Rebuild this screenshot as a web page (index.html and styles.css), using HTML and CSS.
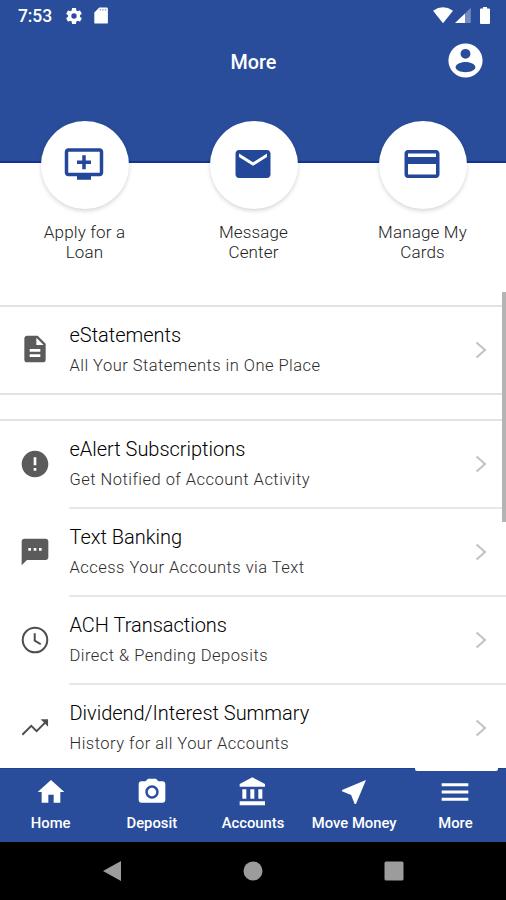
FILE: index.html
```html
<!DOCTYPE html>
<html lang="en">
<head>
    <meta charset="UTF-8">
    <meta name="viewport" content="width=device-width, initial-scale=1.0">
    <title>More</title>
    <link rel="stylesheet" href="styles.css">
</head>
<body>

<div class="phone">
    <header class="header">
        <div class="status-bar">
            <span class="time">7:53</span>
            <svg class="gear" viewBox="0 0 24 24"><path fill-rule="evenodd" d="M19.14 12.94c.04-.3.06-.61.06-.94 0-.32-.02-.64-.07-.94l2.03-1.58c.18-.14.23-.41.12-.61l-1.92-3.32c-.12-.22-.37-.29-.59-.22l-2.39.96c-.5-.38-1.03-.7-1.62-.94l-.36-2.54c-.04-.24-.24-.41-.48-.41h-3.84c-.24 0-.43.17-.47.41l-.36 2.54c-.59.24-1.13.57-1.62.94l-2.39-.96c-.22-.08-.47 0-.59.22L2.74 8.87c-.12.21-.08.47.12.61l2.03 1.58c-.05.3-.09.63-.09.94s.02.64.07.94l-2.03 1.58c-.18.14-.23.41-.12.61l1.92 3.32c.12.22.37.29.59.22l2.39-.96c.5.38 1.03.7 1.62.94l.36 2.54c.05.24.24.41.48.41h3.84c.24 0 .44-.17.47-.41l.36-2.54c.59-.24 1.13-.56 1.62-.94l2.39.96c.22.08.47 0 .59-.22l1.92-3.32c.12-.22.07-.47-.12-.61l-2.01-1.58zM12 15.2a3.2 3.2 0 1 1 0-6.4 3.2 3.2 0 0 1 0 6.4z"/></svg>
            <svg class="sdcard" viewBox="0 0 14 17"><path d="M5.3 .5H12.6Q13.9 .5 13.9 1.8V15.4Q13.9 16.6 12.6 16.6H1.5Q.3 16.6 .3 15.4V5.6z"/><path class="slots" d="M5.6 2h1.4v1.6H5.6zM8.2 2h1.4v1.6H8.2zM10.8 2h1.4v1.6h-1.4z"/></svg>
            <div class="signals">
                <svg class="wifi" viewBox="0 0 20 17"><path d="M0 3.7Q10-3 20 3.7L10 16.2z"/></svg>
                <svg class="cell" viewBox="0 0 16 17"><path opacity=".35" d="M10 6.6 15.8 .8V16H10z"/><path d="M0 16 10 6.6V16z"/></svg>
                <svg class="battery" viewBox="0 0 10 17"><path d="M3 0H7V1.6H9Q10 1.6 10 2.6V16Q10 17 9 17H1Q0 17 0 16V2.6Q0 1.6 1 1.6H3z"/></svg>
            </div>
        </div>
        <div class="title-bar">
            <h1>More</h1>
            <svg class="account" viewBox="0 0 24 24"><path fill-rule="evenodd" d="M12 2a10 10 0 1 0 0 20 10 10 0 0 0 0-20zm0 3.2a2.9 2.9 0 1 1 0 5.8 2.9 2.9 0 0 1 0-5.8zm0 7.7c3 0 5.8 1.4 5.8 3.1S15 18.9 12 18.9 6.2 17.7 6.2 16s2.8-3.1 5.8-3.1z"/></svg>
        </div>
    </header>

    <div class="shortcuts">
        <div class="shortcut">
            <div class="circle"><svg viewBox="0 0 24 24"><path d="M21 3H3c-1.11 0-2 .89-2 2v12c0 1.1.89 2 2 2h5v2h8v-2h5c1.1 0 1.99-.9 1.99-2L23 5c0-1.11-.9-2-2-2zm0 14H3V5h18v12zm-5-7v2h-3v3h-2v-3H8v-2h3V7h2v3h3z"/></svg></div>
            <p>Apply for a<br>Loan</p>
        </div>
        <div class="shortcut">
            <div class="circle"><svg viewBox="0 0 24 24"><path d="M20 4H4c-1.1 0-1.99.9-1.99 2L2 18c0 1.1.9 2 2 2h16c1.1 0 2-.9 2-2V6c0-1.1-.9-2-2-2zm0 4l-8 5-8-5V6l8 5 8-5v2z"/></svg></div>
            <p>Message<br>Center</p>
        </div>
        <div class="shortcut">
            <div class="circle"><svg viewBox="0 0 24 24"><path d="M20 4H4c-1.11 0-1.99.89-1.99 2L2 18c0 1.11.89 2 2 2h16c1.11 0 2-.89 2-2V6c0-1.11-.89-2-2-2zm0 14H4v-6h16v6zm0-10H4V6h16v2z"/></svg></div>
            <p>Manage My<br>Cards</p>
        </div>
    </div>

    <main class="lists">
        <div class="list single">
            <div class="row">
                <svg class="icon" viewBox="0 0 24 24"><path d="M14 2H6c-1.1 0-1.99.9-1.99 2L4 20c0 1.1.89 2 1.99 2H18c1.1 0 2-.9 2-2V8l-6-6zm2 16H8v-2h8v2zm0-4H8v-2h8v2zm-3-5V3.5L18.5 9H13z"/></svg>
                <div class="info"><div><h2>eStatements</h2><p>All Your Statements in One Place</p></div><svg class="chevron" viewBox="0 0 12 18"><path d="M1.5 1.5 10 9 1.5 16.5"/></svg></div>
            </div>
        </div>
        <div class="list">
            <div class="row">
                <svg class="icon" viewBox="0 0 24 24"><path d="M12 2C6.48 2 2 6.48 2 12s4.48 10 10 10 10-4.48 10-10S17.52 2 12 2zm1 15h-2v-2h2v2zm0-4h-2V7h2v6z"/></svg>
                <div class="info"><div><h2>eAlert Subscriptions</h2><p>Get Notified of Account Activity</p></div><svg class="chevron" viewBox="0 0 12 18"><path d="M1.5 1.5 10 9 1.5 16.5"/></svg></div>
            </div>
            <div class="row">
                <svg class="icon" viewBox="0 0 24 24"><path d="M20 2H4c-1.1 0-2 .9-2 2v18l4-4h14c1.1 0 2-.9 2-2V4c0-1.1-.9-2-2-2zM9 11H7V9h2v2zm4 0h-2V9h2v2zm4 0h-2V9h2v2z"/></svg>
                <div class="info"><div><h2>Text Banking</h2><p>Access Your Accounts via Text</p></div><svg class="chevron" viewBox="0 0 12 18"><path d="M1.5 1.5 10 9 1.5 16.5"/></svg></div>
            </div>
            <div class="row">
                <svg class="icon line" viewBox="0 0 24 24"><circle cx="12" cy="12" r="9.2"/><path d="M11.8 7V12.5L16.3 15.2"/></svg>
                <div class="info"><div><h2>ACH Transactions</h2><p>Direct &amp; Pending Deposits</p></div><svg class="chevron" viewBox="0 0 12 18"><path d="M1.5 1.5 10 9 1.5 16.5"/></svg></div>
            </div>
            <div class="row">
                <svg class="icon line" viewBox="0 0 24 24"><path d="M2.5 17 9.2 10.4 13.2 14.4 20.5 7"/><path class="tip" d="M16.3 5.5H21.8V11z"/></svg>
                <div class="info"><div><h2>Dividend/Interest Summary</h2><p>History for all Your Accounts</p></div><svg class="chevron" viewBox="0 0 12 18"><path d="M1.5 1.5 10 9 1.5 16.5"/></svg></div>
            </div>
        </div>
    </main>

    <nav class="tabs">
        <div class="tab"><svg viewBox="0 0 24 24"><path d="M10 20v-6h4v6h5v-8h3L12 3 2 12h3v8z"/></svg><span>Home</span></div>
        <div class="tab"><svg viewBox="0 0 24 24"><circle cx="12" cy="12" r="3.2"/><path d="M9 2L7.17 4H4c-1.1 0-2 .9-2 2v12c0 1.1.9 2 2 2h16c1.1 0 2-.9 2-2V6c0-1.1-.9-2-2-2h-3.17L15 2H9zm3 15c-2.76 0-5-2.24-5-5s2.24-5 5-5 5 2.24 5 5-2.24 5-5 5z"/></svg><span>Deposit</span></div>
        <div class="tab"><svg viewBox="0 0 24 24"><path d="M4 10v7h3v-7H4zm6 0v7h3v-7h-3zM2 22h19v-3H2v3zm14-12v7h3v-7h-3zm-4.5-9L2 6v2h19V6l-9.5-5z"/></svg><span>Accounts</span></div>
        <div class="tab"><svg viewBox="0 0 24 24"><path d="M21 3L3 10.53v.98l6.84 2.65L12.48 21h.98L21 3z"/></svg><span>Move Money</span></div>
        <div class="tab active"><svg viewBox="0 0 24 24"><path d="M2 5.4h20v2.2H2zM2 10.9h20v2.2H2zM2 16.4h20v2.2H2z"/></svg><span>More</span></div>
    </nav>

    <footer class="system-nav">
        <svg viewBox="0 0 20 20"><path d="M19 0V20L1 10z"/></svg>
        <svg viewBox="0 0 20 20"><circle cx="10" cy="10" r="9.5"/></svg>
        <svg viewBox="0 0 20 20"><rect x=".5" y=".5" width="19" height="19" rx="1.5"/></svg>
    </footer>

    <div class="scrollbar"></div>
</div>

</body>
</html>
```
FILE: styles.css
```css
* { box-sizing: border-box; }
body { font-family: Roboto, sans-serif; margin: 0; background: #fff; }
h1, h2, p { margin: 0; font-weight: 400; }
svg { display: block; flex: none; }

.phone { position: relative; display: flex; flex-direction: column; width: 506px; height: 900px; overflow: hidden; }

.header { flex: none; height: 163px; background: #294d9b; color: #fff; fill: #fff; border-bottom: 2px solid #14348f; }
.status-bar { display: flex; align-items: center; height: 31px; padding: 0 16px 0 18px; }
.time { width: 46px; font-size: 17.5px; font-weight: 500; letter-spacing: -0.1px; }
.gear { width: 20px; height: 20px; }
.sdcard { width: 14px; height: 17px; margin-left: 10px; }
.sdcard .slots { fill: #8fa3cd; }
.signals { display: flex; align-items: center; margin-left: auto; }
.wifi { width: 20px; height: 17px; }
.cell { width: 16px; height: 17px; margin-left: 2px; }
.battery { width: 10px; height: 17px; margin-left: 9px; }
.title-bar { display: grid; grid-template-columns: 1fr auto 1fr; align-items: center; height: 60px; padding: 0 20px; }
.title-bar h1 { grid-column: 2; padding: 2px 0 0 1px; font-size: 19.8px; font-weight: 500; }
.account { width: 41px; height: 41px; margin-bottom: 1px; justify-self: end; }

.shortcuts { flex: none; display: flex; width: 507px; height: 142px; margin-top: -42px; }
.shortcut { flex: 1; text-align: center; }
.shortcut p { font-size: 17px; font-weight: 300; line-height: 20px; letter-spacing: 0.15px; color: #222; }
.circle { display: flex; align-items: center; justify-content: center; width: 88px; height: 88px; margin: 0 auto 13px; padding: 0 1px 2px 0; border-radius: 50%; background: #fff; box-shadow: 0 2px 4px rgba(0, 0, 0, 0.16); }
.circle svg { width: 42px; height: 42px; fill: #234799; }

.lists { flex: 1; min-height: 0; margin-top: 42px; overflow: hidden; }
.list { border-top: 2px solid #e2e2e2; }
.single { height: 90px; margin-bottom: 24px; border-bottom: 2px solid #e2e2e2; }
.row { display: flex; align-items: center; height: 88px; padding-left: 19px; }
.icon { width: 32px; height: 32px; margin: 0 18px 3px 0; fill: #5b5b5b; }
.icon.line { fill: none; stroke: #4e4e4e; stroke-width: 1.5; }
.icon .tip { fill: #4e4e4e; stroke: none; }
.info { flex: 1; display: flex; align-items: center; justify-content: space-between; height: 88px; padding: 0 19px 0 0.5px; border-bottom: 2px solid #e8e8e8; }
.single .row, .single .info { height: 86px; }
.single .info { border-bottom: 0; }
.info div { padding-bottom: 2px; }
.info h2 { font-size: 20px; font-weight: 300; line-height: 26px; letter-spacing: -0.02px; color: #000; }
.info p { margin-top: 7px; font-size: 16.5px; font-weight: 300; line-height: 22px; letter-spacing: 0.47px; color: #2c2c2c; }
.chevron { width: 12px; height: 18px; fill: none; stroke: #c2c2c2; stroke-width: 2; }

.tabs { flex: none; display: flex; height: 74px; background: #294d9b; border-top: 1px solid #1d4395; color: #fff; fill: #fff; }
.tab { position: relative; flex: 1; display: flex; flex-direction: column; align-items: center; padding-top: 7px; font-size: 14.8px; font-weight: 500; line-height: 18px; white-space: nowrap; }
.tab svg { width: 32px; height: 32px; margin-bottom: 6px; }
.tab.active::before { content: ""; position: absolute; top: -1px; left: 10px; width: 83px; height: 3px; border-radius: 0 0 2px 2px; background: #fff; }

.system-nav { flex: none; display: flex; align-items: center; justify-content: space-between; height: 58px; padding: 0 102px; background: #000; fill: #9c9c9c; }
.system-nav svg { width: 20px; height: 20px; }

.scrollbar { position: absolute; top: 292px; right: 0; width: 4px; height: 230px; background: #b4b4b4; }
```
